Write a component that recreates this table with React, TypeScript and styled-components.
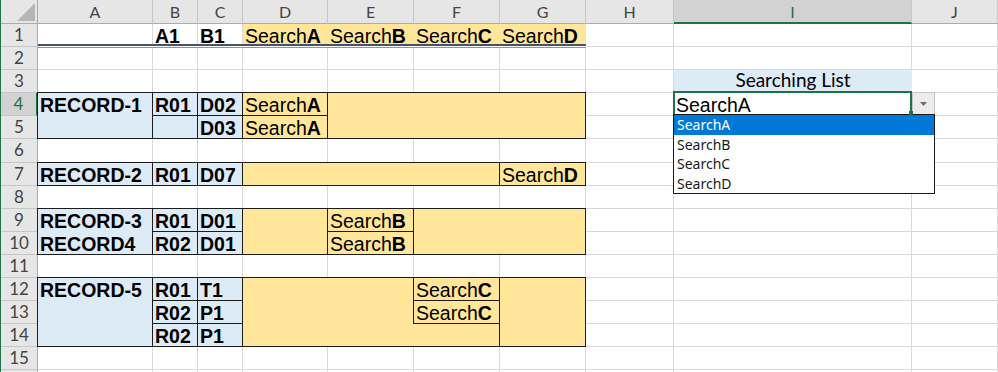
import type { ReactNode } from "react";
import styled, { createGlobalStyle, css } from "styled-components";

type Tone = "blue" | "gold" | "none";

interface Region {
  ref: string;
  tone: Tone;
  lined?: boolean;
  lines?: string[];
  search?: string;
}

const COLUMNS = ["A", "B", "C", "D", "E", "F", "G", "H", "I", "J"];
const ROWS = Array.from({ length: 16 }, (_, i) => i + 1);
const LAST_NUMBERED_ROW = 15;
const ACTIVE_COLUMN = "I";
const ACTIVE_ROW = 4;
const LIST_ITEMS = ["SearchA", "SearchB", "SearchC", "SearchD"];

const TONES: Record<Tone, string> = {
  blue: "#ddebf7",
  gold: "#ffe699",
  none: "transparent",
};

const REGIONS: Region[] = [
  // header row
  { ref: "B1", tone: "none", lined: false, lines: ["A1"] },
  { ref: "C1", tone: "none", lined: false, lines: ["B1"] },
  { ref: "D1", tone: "gold", lined: false, search: "A" },
  { ref: "E1", tone: "gold", lined: false, search: "B" },
  { ref: "F1", tone: "gold", lined: false, search: "C" },
  { ref: "G1", tone: "gold", lined: false, search: "D" },

  // record 1
  { ref: "A4:A5", tone: "blue", lines: ["RECORD-1"] },
  { ref: "B4", tone: "blue", lines: ["R01"] },
  { ref: "B5", tone: "blue" },
  { ref: "C4", tone: "blue", lines: ["D02"] },
  { ref: "C5", tone: "blue", lines: ["D03"] },
  { ref: "D4", tone: "gold", search: "A" },
  { ref: "D5", tone: "gold", search: "A" },
  { ref: "E4:G5", tone: "gold" },

  // record 2
  { ref: "A7", tone: "blue", lines: ["RECORD-2"] },
  { ref: "B7", tone: "blue", lines: ["R01"] },
  { ref: "C7", tone: "blue", lines: ["D07"] },
  { ref: "D7:F7", tone: "gold" },
  { ref: "G7", tone: "gold", search: "D" },

  // records 3 and 4
  { ref: "A9:A10", tone: "blue", lines: ["RECORD-3", "RECORD4"] },
  { ref: "B9", tone: "blue", lines: ["R01"] },
  { ref: "B10", tone: "blue", lines: ["R02"] },
  { ref: "C9", tone: "blue", lines: ["D01"] },
  { ref: "C10", tone: "blue", lines: ["D01"] },
  { ref: "D9:D10", tone: "gold" },
  { ref: "E9", tone: "gold", search: "B" },
  { ref: "E10", tone: "gold", search: "B" },
  { ref: "F9:G10", tone: "gold" },

  // record 5
  { ref: "A12:A14", tone: "blue", lines: ["RECORD-5"] },
  { ref: "B12", tone: "blue", lines: ["R01"] },
  { ref: "B13", tone: "blue", lines: ["R02"] },
  { ref: "B14", tone: "blue", lines: ["R02"] },
  { ref: "C12", tone: "blue", lines: ["T1"] },
  { ref: "C13", tone: "blue", lines: ["P1"] },
  { ref: "C14", tone: "blue", lines: ["P1"] },
  { ref: "D12:F14", tone: "gold" },
  { ref: "F12", tone: "gold", search: "C" },
  { ref: "F13", tone: "gold", search: "C" },
  { ref: "G12:G14", tone: "gold" },
];

// "A4:B5" -> grid lines of the sheet (track 1 is the row heading / column heading)
function place(ref: string): { row: string; column: string } {
  const [from, to = from] = ref.split(":");
  const parse = (cell: string) => ({
    column: COLUMNS.indexOf(cell[0]) + 2,
    row: Number(cell.slice(1)) + 1,
  });
  const a = parse(from);
  const b = parse(to);
  return { row: `${a.row} / ${b.row + 1}`, column: `${a.column} / ${b.column + 1}` };
}

function RegionBlock({ region }: { region: Region }): JSX.Element {
  const { row, column } = place(region.ref);
  let content: ReactNode = null;
  if (region.search) {
    content = (
      <Line>
        Search<Strong>{region.search}</Strong>
      </Line>
    );
  } else if (region.lines) {
    content = region.lines.map((text, i) => (
      <Line key={i} $bold>
        {text}
      </Line>
    ));
  }
  return (
    <Block $row={row} $column={column} $tone={region.tone} $lined={region.lined !== false}>
      {content}
    </Block>
  );
}

function App(): JSX.Element {
  return (
    <Frame>
      <GlobalStyles />
      <Layer>
        <Corner>
          <CornerMark />
        </Corner>
        {COLUMNS.map((col) => (
          <ColumnHeading key={col} $active={col === ACTIVE_COLUMN}>
            {col}
          </ColumnHeading>
        ))}
        {ROWS.map((row) => [
          <RowHeading key={`h${row}`} $active={row === ACTIVE_ROW}>
            {row <= LAST_NUMBERED_ROW ? row : null}
          </RowHeading>,
          ...COLUMNS.map((col) => <Cell key={`${col}${row}`} />),
        ])}
      </Layer>

      <Layer>
        {REGIONS.map((region) => (
          <RegionBlock key={region.ref} region={region} />
        ))}
        <HeadingRule />
        <Caption>Searching List</Caption>
        <ActiveCell>
          SearchA
          <DropButton>
            <svg width="7" height="4" viewBox="0 0 7 4">
              <polygon points="0,0 7,0 3.5,4" fill="#6b6b6b" />
            </svg>
          </DropButton>
          <ListBox>
            {LIST_ITEMS.map((item, i) => (
              <ListItem key={item} $selected={i === 0}>
                {item}
              </ListItem>
            ))}
          </ListBox>
          <FillHandle />
        </ActiveCell>
      </Layer>
    </Frame>
  );
}

export default App;

const GlobalStyles = createGlobalStyle`
  * {
    box-sizing: border-box;
  }

  body {
    margin: 0;
    background: #ffffff;
  }
`;

const sheetTracks = css`
  grid-template-columns: 37px 115px 45px 45px 85px 86px 86px 86px 88px 238px 1fr;
  grid-template-rows: 24px repeat(5, 23px) 24px repeat(10, 23px);
`;

const Frame = styled.div`
  display: grid;
  width: 998px;
  height: 372px;
  overflow: hidden;
  border-left: 1px solid #217346;
  background: #ffffff;

  & > * {
    grid-area: 1 / 1;
  }
`;

const Layer = styled.div`
  display: grid;
  ${sheetTracks}
`;

const headingText = css`
  font-family: Lato, "Liberation Sans", sans-serif;
  color: #444444;
  text-align: center;
`;

const Corner = styled.div`
  display: flex;
  justify-content: flex-end;
  align-items: flex-end;
  padding: 0 2px 2px 0;
  background: #e6e6e6;
  border-right: 1px solid #ababab;
  border-bottom: 1px solid #ababab;
`;

const CornerMark = styled.span`
  width: 18px;
  height: 18px;
  background: #b6b6b6;
  clip-path: polygon(100% 0, 100% 100%, 0 100%);
`;

const ColumnHeading = styled.div<{ $active: boolean }>`
  ${headingText}
  font-size: 16px;
  line-height: 23px;
  background: ${(p) => (p.$active ? "#d2d2d2" : "#e6e6e6")};
  color: ${(p) => (p.$active ? "#217346" : "#444444")};
  border-right: 1px solid #c6c6c6;
  border-bottom: ${(p) => (p.$active ? "2px solid #217346" : "1px solid #ababab")};
`;

const RowHeading = styled.div<{ $active: boolean }>`
  ${headingText}
  font-size: 17px;
  line-height: 22px;
  background: ${(p) => (p.$active ? "#d2d2d2" : "#e6e6e6")};
  color: ${(p) => (p.$active ? "#217346" : "#444444")};
  border-right: ${(p) => (p.$active ? "2px solid #217346" : "1px solid #ababab")};
  border-bottom: 1px solid #c6c6c6;
`;

const Cell = styled.div`
  border-right: 1px solid #d9d9d9;
  border-bottom: 1px solid #d9d9d9;
`;

const Block = styled.div<{ $row: string; $column: string; $tone: Tone; $lined: boolean }>`
  grid-row: ${(p) => p.$row};
  grid-column: ${(p) => p.$column};
  ${(p) =>
    p.$lined &&
    css`
      margin: -1px 0 0 -1px;
      border: 1px solid #1c1c1c;
    `}
  padding: 1px 2px 0;
  background: ${(p) => TONES[p.$tone]};
  font-family: "Liberation Sans", Arial, sans-serif;
  font-size: 19.5px;
  line-height: 23px;
  color: #000000;
  white-space: nowrap;
`;

const Line = styled.div<{ $bold?: boolean }>`
  font-weight: ${(p) => (p.$bold ? 700 : 400)};
`;

const Strong = styled.b`
  font-weight: 700;
`;

const HeadingRule = styled.div`
  grid-row: 2;
  grid-column: 2 / 9;
  align-self: end;
  height: 4px;
  margin-bottom: -1px;
  background: #ffffff;
  border-top: 2px solid #44546a;
  border-bottom: 1px solid #8497b0;
`;

const Caption = styled.div`
  grid-row: 4;
  grid-column: 10;
  background: #ddebf7;
  font-family: Lato, "Liberation Sans", sans-serif;
  font-size: 19px;
  line-height: 20px;
  text-align: center;
  color: #000000;
`;

const ActiveCell = styled.div`
  grid-row: 5;
  grid-column: 10;
  position: relative;
  margin: -2px 0 -1px -1px;
  padding: 1px 1px 0;
  border: 2px solid #217346;
  background: #ffffff;
  font-family: "Liberation Sans", Arial, sans-serif;
  font-size: 19.5px;
  line-height: 23px;
  color: #000000;
  white-space: nowrap;
`;

const FillHandle = styled.span`
  position: absolute;
  left: 234px;
  top: 18px;
  width: 4px;
  height: 4px;
  background: #217346;
  z-index: 2;
`;

const DropButton = styled.span`
  position: absolute;
  left: 237px;
  top: -1px;
  width: 23px;
  height: 24px;
  display: flex;
  align-items: center;
  justify-content: center;
  background: #ececec;
  border: 1px solid #c4c4c4;
`;

const ListBox = styled.div`
  position: absolute;
  left: -2px;
  top: 21px;
  width: 262px;
  border: 1px solid #1a1a1a;
  background: #ffffff;
  z-index: 1;
`;

const ListItem = styled.div<{ $selected: boolean }>`
  height: 19.5px;
  padding-left: 3px;
  font-family: "Noto Sans", "Open Sans", sans-serif;
  font-size: 14px;
  line-height: 19.5px;
  background: ${(p) => (p.$selected ? "#0078d7" : "transparent")};
  color: ${(p) => (p.$selected ? "#ffffff" : "#1a1a1a")};
`;
